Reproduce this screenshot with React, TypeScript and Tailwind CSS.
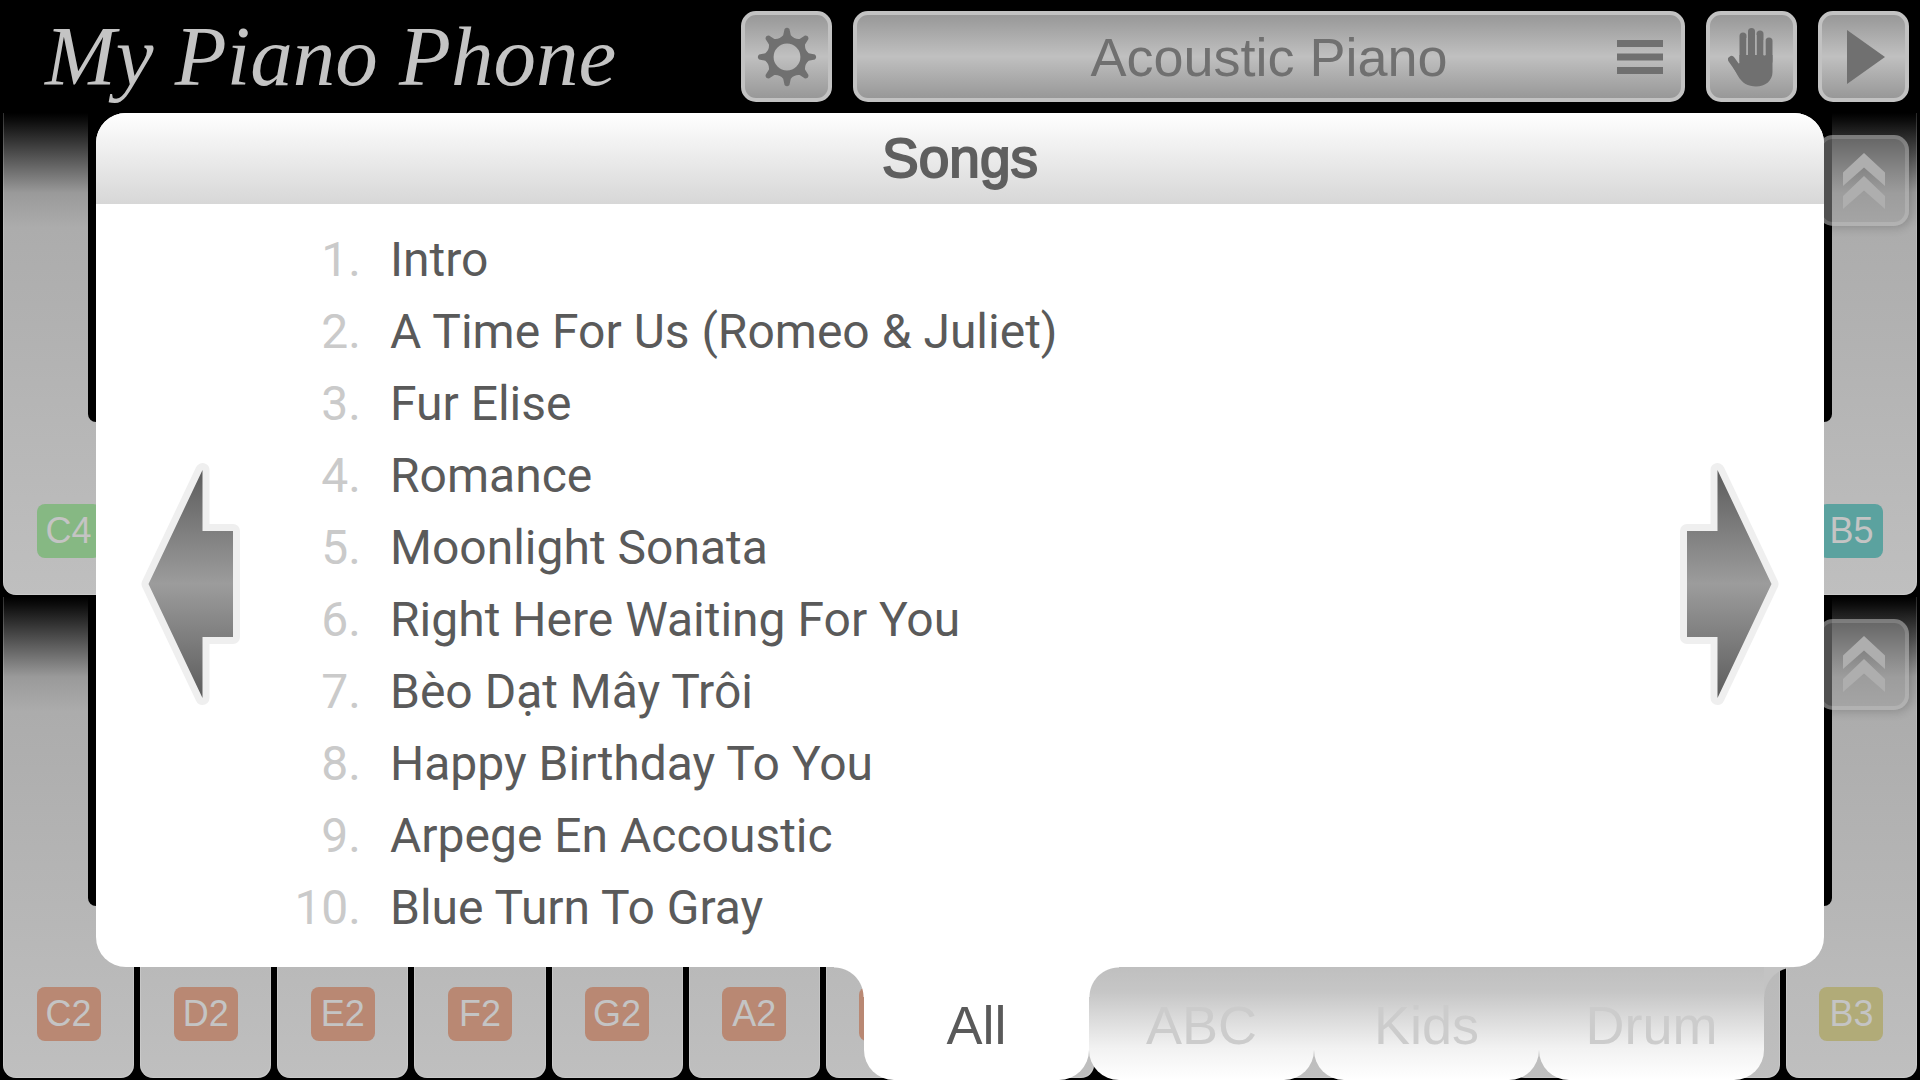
import React, { useState } from "react";

const NOTES = ["C", "D", "E", "F", "G", "A", "B"];
const SHARPS = ["C", "D", "F", "G", "A"];

// Keys that the song dialog leaves in view, and so carry a readable label.
const LABELLED = ["C4", "B5", "C2", "D2", "E2", "F2", "G2", "A2", "B3"];

const BADGE: Record<number, string> = {
  2: "bg-[#b98873]",
  3: "bg-[#b1ab78]",
  4: "bg-[#86b883]",
  5: "bg-[#5ba29f]",
};

const SONGS = [
  "Intro",
  "A Time For Us (Romeo & Juliet)",
  "Fur Elise",
  "Romance",
  "Moonlight Sonata",
  "Right Here Waiting For You",
  "Bèo Dạt Mây Trôi",
  "Happy Birthday To You",
  "Arpege En Accoustic",
  "Blue Turn To Gray",
];

const TABS = ["All", "ABC", "Kids", "Drum"];

const METAL =
  "rounded-[15px] border-4 border-[#c2c2c2] bg-linear-to-b from-[#989898] via-[#c0c0c0] to-[#989898] text-[#707070]";

function gearPath() {
  const point = (r: number, deg: number) => {
    const a = (deg * Math.PI) / 180;
    return `${(30 + r * Math.cos(a)).toFixed(2)} ${(30 + r * Math.sin(a)).toFixed(2)}`;
  };
  let d = "";
  for (let i = 0; i < 8; i++) {
    const a = i * 45;
    d += `${i === 0 ? "M" : "L"}${point(22, a - 10)} L${point(28, a - 5)} Q${point(30.5, a)} ${point(28, a + 5)} L${point(22, a + 10)} Q${point(19, a + 22.5)} ${point(22, a + 35)} `;
  }
  return d + "Z M43.4 30 A13.4 13.4 0 1 0 16.6 30 A13.4 13.4 0 1 0 43.4 30 Z";
}

function GearIcon() {
  return (
    <svg viewBox="0 0 60 60" className="size-[60px]" fill="currentColor" aria-hidden="true">
      <path fillRule="evenodd" d={gearPath()} />
    </svg>
  );
}

function HandIcon() {
  return (
    <svg viewBox="2 0 48 60" className="h-[60px] w-12" aria-hidden="true">
      <g stroke="currentColor" strokeWidth="7" strokeLinecap="round" fill="none">
        <path d="M17 9V34" />
        <path d="M25.500 4.500V34" />
        <path d="M34 7V34" />
        <path d="M43 14V34" />
        <path d="M5.500 32.500L15 46" />
      </g>
      <path
        fill="currentColor"
        d="M13.500 28H46.500V45C46.500 54 39 59.500 30 59.500C22 59.500 16 56 12 49L7 40L13.500 36Z"
      />
      <g stroke="#adadad" strokeWidth="1.600">
        <path d="M21.200 11V28" />
        <path d="M29.800 8V28" />
        <path d="M38.500 13V28.500" />
      </g>
    </svg>
  );
}

function PlayIcon() {
  return (
    <svg viewBox="0 0 38 54" className="ml-1 h-[54px] w-[38px]" fill="currentColor" aria-hidden="true">
      <path d="M0 0L38 27L0 54Z" />
    </svg>
  );
}

function MenuIcon() {
  return (
    <svg viewBox="0 0 46 34" className="h-[34px] w-[46px]" fill="currentColor" aria-hidden="true">
      <rect width="46" height="7" />
      <rect y="13.500" width="46" height="7" />
      <rect y="27" width="46" height="7" />
    </svg>
  );
}

function ChevronsIcon() {
  return (
    <svg viewBox="0 0 42 56" className="h-14 w-[42px]" fill="currentColor" aria-hidden="true">
      <path d="M21 0L42 19.500V33L21 14.500L0 33V19.500Z" />
      <path d="M21 23L42 43V56L21 37.500L0 56V43Z" />
    </svg>
  );
}

function PageArrow({ id, flipped = false }: { id: string; flipped?: boolean }) {
  return (
    <svg
      viewBox="0 0 100 244"
      className={flipped ? "h-[244px] w-[100px] -scale-x-100" : "h-[244px] w-[100px]"}
      aria-hidden="true"
    >
      <defs>
        <linearGradient id={id} x1="0" y1="0" x2="0" y2="1">
          <stop offset="0" stopColor="#5c5c5c" />
          <stop offset="0.5" stopColor="#9c9c9c" />
          <stop offset="1" stopColor="#5c5c5c" />
        </linearGradient>
      </defs>
      <path
        d="M8.500 122L62.500 8V69H93V175H62.500V236Z"
        fill="#efefef"
        stroke="#efefef"
        strokeWidth="14"
        strokeLinejoin="round"
      />
      <path d="M8.500 122L62.500 8V69H93V175H62.500V236Z" fill={`url(#${id})`} />
    </svg>
  );
}

function WhiteKey({ note, octave }: { note: string; octave: number }) {
  const name = `${note}${octave}`;
  return (
    <div className="relative px-[3px] pb-[2px]">
      <button
        type="button"
        aria-label={name}
        className="flex h-full w-full items-end justify-center rounded-b-[13px] bg-[linear-gradient(to_bottom,#000_0,#0d0d0d_8px,#9a9a9a_80px,#acacac_115px,#bfbfbf_100%)] pb-[37px] shadow-[inset_1px_0_#ffffff30,inset_-1px_-1px_#ffffff28]"
      >
        <span
          className={`flex h-[54px] w-16 items-center justify-center rounded-lg font-['Liberation_Sans_Narrow','Liberation_Sans',sans-serif] text-[36px] leading-none text-[#c4c4c4] ${BADGE[octave]}`}
        >
          {LABELLED.includes(name) && name}
        </span>
      </button>
      {SHARPS.includes(note) && (
        <button
          type="button"
          aria-label={`${note}#${octave}`}
          className="absolute top-0 left-full z-10 h-[64%] w-[98px] -translate-x-1/2 rounded-b-lg bg-black"
        />
      )}
    </div>
  );
}

function KeyboardRow({ octaves }: { octaves: number[] }) {
  return (
    <div className="relative grid flex-1 grid-cols-14">
      {octaves.map((octave) =>
        NOTES.map((note) => <WhiteKey key={note + octave} note={note} octave={octave} />),
      )}
      <button
        type="button"
        aria-label="Shift keyboard"
        className="absolute top-[22px] right-[11px] z-20 flex size-[91px] items-center justify-center rounded-[15px] border-4 border-white/15 bg-[#a0a0a0]/50 text-[#aeaeae] shadow-[2px_3px_8px_#00000026]"
      >
        <ChevronsIcon />
      </button>
    </div>
  );
}

function SongDialog() {
  const [tab, setTab] = useState("All");
  return (
    <div className="absolute inset-x-[5%] top-0 z-30">
      <section
        role="dialog"
        aria-label="Songs"
        className="overflow-hidden rounded-[30px] bg-white"
      >
        <h1 className="bg-linear-to-b from-white to-[#d7d7d7] text-center font-['Liberation_Sans',Arial,sans-serif] text-[55px] leading-[91px] text-[#5f5f5f] [-webkit-text-stroke:2px_#5f5f5f]">
          Songs
        </h1>
        <div className="flex items-center px-11 pt-5 pb-[23px]">
          <button type="button" aria-label="Previous page">
            <PageArrow id="arrow-prev" />
          </button>
          <ol className="flex-1 pl-11 font-[Roboto,sans-serif] text-[48px] leading-[72px]">
            {SONGS.map((song, i) => (
              <li key={song}>
                <button type="button" className="flex text-left whitespace-nowrap text-[#5a5a5a]">
                  <span className="w-[77px] text-right text-[#cacaca]">{i + 1}.</span>
                  <span className="pl-[29px]">{song}</span>
                </button>
              </li>
            ))}
          </ol>
          <button type="button" aria-label="Next page">
            <PageArrow id="arrow-next" flipped />
          </button>
        </div>
      </section>
      <div role="tablist" className="flex justify-end pr-[60px]">
        {TABS.map((name) => {
          const active = name === tab;
          return (
            <button
              key={name}
              type="button"
              role="tab"
              aria-selected={active}
              onClick={() => setTab(name)}
              className={`relative h-[113px] w-[225px] rounded-b-[30px] pt-[3px] font-['Liberation_Sans',Arial,sans-serif] text-[54px] leading-none ${
                active
                  ? "z-10 bg-white text-[#5a5a5a]"
                  : "bg-[linear-gradient(to_bottom,#bfbfbf_0,#c6c6c6_22%,#f2f2f2_72%,#fff_100%)] text-[#cccccc]"
              }`}
            >
              {name}
              {active && (
                <span className="absolute top-0 right-full size-[30px] bg-[radial-gradient(circle_at_bottom_left,transparent_29px,white_30px)]" />
              )}
              <span
                className={`absolute top-0 left-full size-[30px] ${
                  active
                    ? "bg-[radial-gradient(circle_at_bottom_right,transparent_29px,white_30px)]"
                    : "bg-[radial-gradient(circle_at_bottom_right,transparent_29px,#c3c3c3_30px)]"
                }`}
              />
            </button>
          );
        })}
      </div>
    </div>
  );
}

export default function App() {
  return (
    <main className="flex min-h-screen w-full flex-col bg-black">
      <header className="flex h-[113px] items-center gap-[21px] pr-[11px] pl-[45px]">
        <p className="w-[675px] shrink-0 font-['Liberation_Serif','Times_New_Roman',serif] text-[85px] leading-none whitespace-nowrap text-[#c4c4c4] italic">
          My Piano Phone
        </p>
        <button
          type="button"
          aria-label="Settings"
          className={`flex size-[91px] shrink-0 items-center justify-center ${METAL}`}
        >
          <GearIcon />
        </button>
        <button
          type="button"
          className={`relative h-[91px] flex-1 font-['Liberation_Sans',Arial,sans-serif] text-[54px] leading-none ${METAL}`}
        >
          Acoustic Piano
          <span className="absolute inset-y-0 right-[18px] flex items-center">
            <MenuIcon />
          </span>
        </button>
        <button
          type="button"
          aria-label="Hand"
          className={`flex size-[91px] shrink-0 items-center justify-center ${METAL}`}
        >
          <HandIcon />
        </button>
        <button
          type="button"
          aria-label="Play"
          className={`flex size-[91px] shrink-0 items-center justify-center ${METAL}`}
        >
          <PlayIcon />
        </button>
      </header>
      <div className="relative flex flex-1 flex-col">
        <KeyboardRow octaves={[4, 5]} />
        <KeyboardRow octaves={[2, 3]} />
        <SongDialog />
      </div>
    </main>
  );
}
